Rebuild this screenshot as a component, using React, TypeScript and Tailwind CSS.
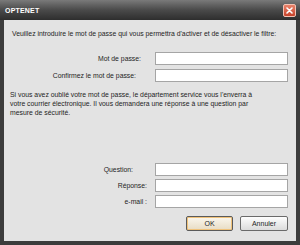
import React from "react";

const font = { fontFamily: '"Liberation Sans", Arial, sans-serif' };

function Field({ label, pr }: { label: string; pr: string }) {
  return (
    <div className="flex items-center h-[13px]">
      <span className={`flex-1 text-right ${pr}`}>{label}</span>
      <div className="w-[133px] h-[13px] bg-white border border-[#a5a5a5] mr-[8px]" />
    </div>
  );
}

export default function App() {
  return (
    <div
      className="w-[300px] h-[245px] flex flex-col bg-[#3c3c3c] text-[6.85px] leading-[9px] text-[#1e1e1e]"
      style={font}
    >
      <div className="h-[20px] flex items-center justify-between pl-[5px] pr-[4px] bg-gradient-to-b from-[#7a7a7a] via-[#4a4a4a] to-[#2e2e2e]">
        <span className="text-white font-bold text-[7px] tracking-[0.2px]">OPTENET</span>
        <div className="w-[13px] h-[13px] rounded-[2px] border border-[#f3c2b4] bg-gradient-to-b from-[#e8826a] to-[#c8422a] flex items-center justify-center">
          <svg width="7" height="7" viewBox="0 0 7 7">
            <path d="M1 1 L6 6 M6 1 L1 6" stroke="white" strokeWidth="1.6" strokeLinecap="round" />
          </svg>
        </div>
      </div>
      <div className="flex-1 mx-[4px] mb-[4px] bg-[#e3e3e3] flex flex-col">
        <p className="mt-[9px] pl-[8px]">
          Veuillez introduire le mot de passe qui vous permettra d'activer et de désactiver le filtre:
        </p>
        <div className="mt-[14px] flex flex-col gap-[4px]">
          <Field label="Mot de passe:" pr="pr-[14px]" />
          <Field label="Confirmez le mot de passe:" pr="pr-[19px]" />
        </div>
        <p className="mt-[8px] pl-[6px] w-[258px]">
          Si vous avez oublié votre mot de passe, le département service vous l'enverra à votre
          courrier électronique. Il vous demandera une réponse à une question par mesure de sécurité.
        </p>
        <div className="mt-[46px] flex flex-col gap-[3px]">
          <Field label="Question:" pr="pr-[22px]" />
          <Field label="Réponse:" pr="pr-[8px]" />
          <Field label="e-mail :" pr="pr-[8px]" />
        </div>
        <div className="mt-[8px] flex justify-end gap-[7px] mr-[8px]">
          <button className="w-[47px] h-[15px] rounded-[2px] border border-[#5a5a5a] bg-gradient-to-b from-[#fbf7ee] to-[#e7dcc4] shadow-[inset_0_0_0_1px_#f0c27a] text-[7px] leading-none text-[#1e1e1e]">
            OK
          </button>
          <button className="w-[48px] h-[15px] rounded-[2px] border border-[#6a6a6a] bg-gradient-to-b from-[#fdfdfd] to-[#dcdcdc] text-[7px] leading-none text-[#1e1e1e]">
            Annuler
          </button>
        </div>
      </div>
    </div>
  );
}
